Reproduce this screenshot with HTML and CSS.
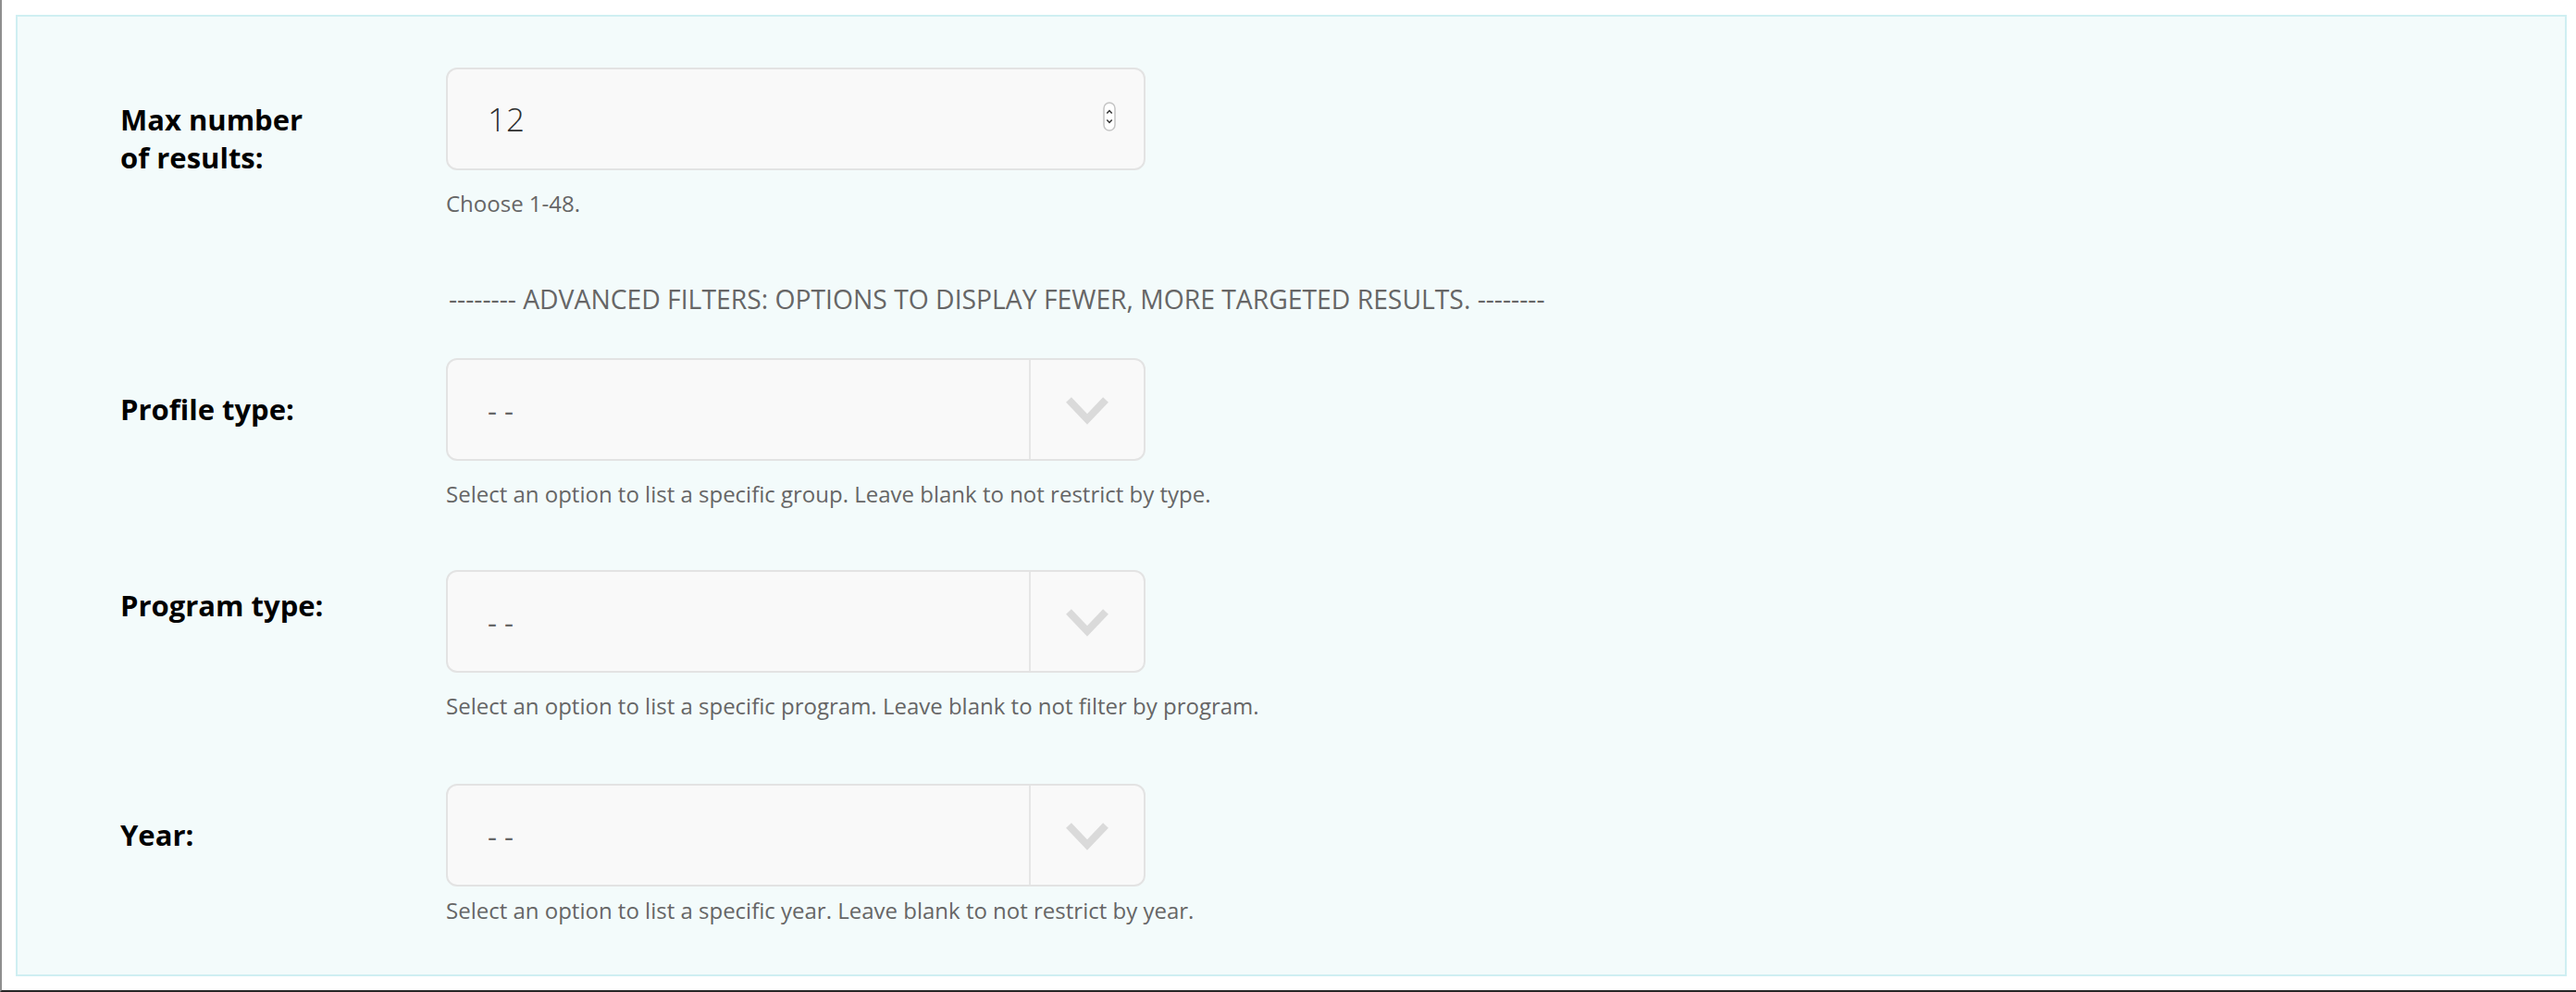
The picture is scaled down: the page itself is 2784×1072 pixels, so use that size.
FILE: index.html
```html
<!DOCTYPE html>
<html lang="en">
<head>
<meta charset="utf-8">
<title>Search settings</title>
<link rel="stylesheet" href="styles.css">
</head>
<body>
<div class="frame">
  <form class="panel">
    <div class="row row-max">
      <label class="label">Max number<br>of results:</label>
      <div class="field">
        <div class="control">
          <span class="control-value number">12</span>
          <span class="spinner">
            <svg width="14" height="32" viewBox="0 0 14 32">
              <rect x="1" y="1" width="12" height="30" rx="6" fill="#fff" stroke="#c4c4c4" stroke-width="1.5"/>
              <path d="M4.3 12.5 L7 9.5 L9.7 12.5" fill="none" stroke="#333" stroke-width="1.5"/>
              <path d="M4.3 19.5 L7 22.5 L9.7 19.5" fill="none" stroke="#333" stroke-width="1.5"/>
            </svg>
          </span>
        </div>
        <p class="help">Choose 1-48.</p>
      </div>
    </div>

    <div class="advanced">-------- ADVANCED FILTERS: OPTIONS TO DISPLAY FEWER, MORE TARGETED RESULTS. --------</div>

    <div class="row row-profile">
      <label class="label">Profile type:</label>
      <div class="field">
        <div class="control select">
          <span class="control-value">- -</span>
          <span class="arrow">
            <svg width="46" height="30" viewBox="0 0 46 30"><path d="M3 3 L23 24 L43 3" fill="none" stroke="#dadada" stroke-width="8"/></svg>
          </span>
        </div>
        <p class="help">Select an option to list a specific group. Leave blank to not restrict by type.</p>
      </div>
    </div>

    <div class="row row-program">
      <label class="label label-high">Program type:</label>
      <div class="field">
        <div class="control select">
          <span class="control-value">- -</span>
          <span class="arrow">
            <svg width="46" height="30" viewBox="0 0 46 30"><path d="M3 3 L23 24 L43 3" fill="none" stroke="#dadada" stroke-width="8"/></svg>
          </span>
        </div>
        <p class="help">Select an option to list a specific program. Leave blank to not filter by program.</p>
      </div>
    </div>

    <div class="row row-year">
      <label class="label">Year:</label>
      <div class="field">
        <div class="control select">
          <span class="control-value">- -</span>
          <span class="arrow">
            <svg width="46" height="30" viewBox="0 0 46 30"><path d="M3 3 L23 24 L43 3" fill="none" stroke="#dadada" stroke-width="8"/></svg>
          </span>
        </div>
        <p class="help help-tight">Select an option to list a specific year. Leave blank to not restrict by year.</p>
      </div>
    </div>
  </form>
</div>
</body>
</html>
```

FILE: styles.css
```css
html, body {
  margin: 0;
  padding: 0;
  background: #ffffff;
  font-family: "Open Sans", "Noto Sans", sans-serif;
}

.frame {
  height: 1072px;
  box-sizing: border-box;
  border-left: 2px solid #8e8e8e;
  border-bottom: 2px solid #262626;
  padding: 16px 10px 0 15px;
}

.panel {
  height: 1039px;
  box-sizing: border-box;
  border: 2px solid #cfeff2;
  background: #f3fbfb;
  padding: 55px 0 0 111px;
}

.row {
  display: grid;
  grid-template-columns: 352px 756px;
  align-items: start;
}

.row-max { margin-bottom: 68px; }
.row-profile { margin-bottom: 66px; }
.row-program { margin-bottom: 68px; }

.label {
  display: block;
  padding-top: 36px;
  font-size: 31px;
  line-height: 41px;
  font-weight: 700;
  color: #000;
}

.row-profile .label,
.row-year .label { padding-top: 35px; }

.row .label-high { padding-top: 18px; }

.field {
  display: flex;
  flex-direction: column;
}

.control {
  height: 111px;
  box-sizing: border-box;
  border: 2px solid #e3e3e3;
  border-radius: 12px;
  background: #f9f9f9;
  display: flex;
  align-items: center;
}

.control-value {
  flex: 1;
  padding-left: 43px;
  font-size: 31px;
  color: #666;
}

.control-value.number {
  font-size: 35px;
  font-weight: 300;
  color: #2e2e2e;
}

.spinner {
  display: flex;
  margin-right: 30px;
  margin-top: -6px;
}

.select .arrow {
  align-self: stretch;
  width: 122px;
  border-left: 2px solid #e6e6e6;
  display: flex;
  align-items: center;
  justify-content: center;
  padding-top: 2px;
}

.help {
  margin: 20px 0 0;
  font-size: 24px;
  line-height: 32px;
  color: #666;
  white-space: nowrap;
}

.help-tight { margin-top: 10px; }

.advanced {
  margin: 0 0 45px 352px;
  padding-left: 3px;
  font-size: 28.3px;
  line-height: 38px;
  color: #666;
  white-space: nowrap;
}
```
